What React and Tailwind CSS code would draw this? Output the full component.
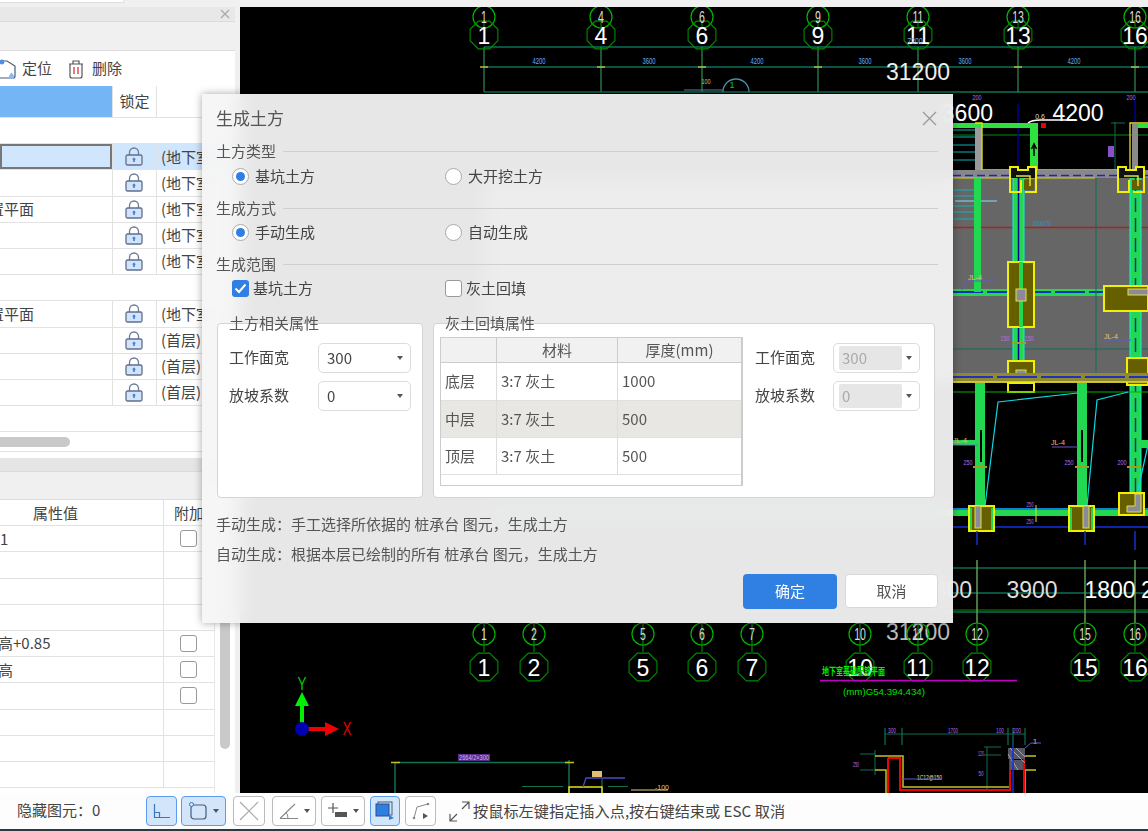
import React from 'react';

const F = { fontFamily: '"Noto Sans CJK SC","Liberation Sans",sans-serif' };
const COLON = '\uFF1A';
const COMMA = '\uFF0C';

function Lock() {
  return (
    <svg width="18" height="19" viewBox="0 0 18 19" className="block">
      <path d="M4.5 8V5.5a4.5 4.5 0 0 1 9 0V8" fill="none" stroke="#6b7a96" strokeWidth="1.3" />
      <rect x="1" y="8" width="16" height="10" rx="1.5" fill="#d3e3fa" stroke="#5f6f8e" strokeWidth="1.3" />
      <path d="M9 10.5l2 2H9.8V15H8.2v-2.5H7z" fill="#2b7de0" />
    </svg>
  );
}

const Check = () => <span className="block w-[17px] h-[17px] rounded-[3px] border border-[#999] bg-white" />;

const upperGroups = [
  [['', true], ['', false], ['置平面', false], ['', false], ['', false]],
  [['置平面', false], ['', false], ['', false], ['', false]],
];
const layers = [['(地下室)', '(地下室)', '(地下室)', '(地下室)', '(地下室)'], ['(地下室)', '(首层)', '(首层)', '(首层)']];

function BlankRow() {
  return <div className="h-[26.2px] border-b border-[#e2e2e2] bg-white" />;
}

function UpperRow({ name, selected, layer }) {
  return (
    <div className={`flex h-[26.2px] border-b border-[#e2e2e2] text-[15px] text-[#444] ${selected ? 'bg-[#d0e6fc]' : 'bg-white'}`}>
      <div className={`w-[112px] overflow-hidden flex items-center whitespace-nowrap ${selected ? 'border-2 border-[#777]' : ''}`}>
        <span className="-ml-[11px]">{name}</span>
      </div>
      <div className="w-[45px] border-x border-[#e2e2e2] flex items-center justify-center pr-[2px]"><Lock /></div>
      <div className="flex-1 pl-1 flex items-center whitespace-nowrap overflow-hidden">{layer}</div>
    </div>
  );
}

const lower = [['1', true], ['', false], ['', false], ['', false], ['高+0.85', true], ['高', true], ['', true], ['', false], ['', false], ['', false]];

function LeftPanel() {
  return (
    <aside className="w-[235px] h-full flex flex-col bg-white overflow-hidden text-[#444]">
      <div className="h-[15px] bg-[#e8e8e8] border-b border-[#dcdcdc] flex items-center justify-end pr-[5px] shrink-0">
        <svg width="10" height="10" viewBox="0 0 10 10"><path d="M1 1l8 8M9 1L1 9" stroke="#aaa" strokeWidth="1.3" /></svg>
      </div>
      <div className="h-[29px] bg-[#f0f0f0] border-b border-[#dcdcdc] shrink-0" />
      <div className="h-[35px] flex items-center text-[15px] shrink-0">
        <svg width="17" height="22" viewBox="0 0 17 22" className="mr-[5px]">
          <path d="M0 3h7l8 5v10a2 2 0 0 1-2 2H0" fill="none" stroke="#4a5a78" strokeWidth="1.2" />
          <circle cx="2" cy="4" r="2.4" fill="#4a90e8" />
          <path d="M12 21c-2 0-3-1-3-2.500 0-1.500 1.500-2 2-4 1.500 1 3 2.500 3 4 0 1.500-1 2.500-2 2.500z" fill="#8ab8f0" />
        </svg>
        <span>定位</span>
        <svg width="18" height="20" viewBox="0 0 18 20" className="ml-[15px] mr-[7px]">
          <path d="M2 5h14M6 5V2h6v3" fill="none" stroke="#555" strokeWidth="1.2" />
          <path d="M3 5v12a2 2 0 0 0 2 2h8a2 2 0 0 0 2-2V5" fill="none" stroke="#555" strokeWidth="1.2" />
          <path d="M7 8v7M11 8v7" stroke="#e04040" strokeWidth="1.4" />
        </svg>
        <span>删除</span>
      </div>
      <div className="h-[32px] flex border-b border-[#e2e2e2] text-[15px] shrink-0">
        <div className="w-[112px] bg-[#74b5f6]" />
        <div className="w-[45px] border-x border-[#e2e2e2] flex items-center justify-center">锁定</div>
        <div className="flex-1" />
      </div>
      <BlankRow />
      {upperGroups[0].map((r, i) => <UpperRow key={i} name={r[0]} selected={r[1]} layer={layers[0][i]} />)}
      <BlankRow />
      {upperGroups[1].map((r, i) => <UpperRow key={i} name={r[0]} selected={r[1]} layer={layers[1][i]} />)}
      <BlankRow />
      <div className="h-[20px] border-b border-[#e2e2e2] flex items-center shrink-0">
        <div className="w-[70px] h-[10px] rounded-r-full bg-[#c9c9c9]" />
      </div>
      <div className="h-[6px] shrink-0" />
      <div className="h-[14px] bg-[#e5e5e5] border-b border-[#dcdcdc] shrink-0" />
      <div className="h-[28px] bg-[#f0f0f0] border-b border-[#dcdcdc] shrink-0" />
      <div className="flex flex-1 min-h-0 text-[15px]">
        <div className="w-[214px]">
          <div className="flex h-[26px] border-b border-[#e2e2e2]">
            <div className="w-[163px] pl-[33px] flex items-center">属性值</div>
            <div className="flex-1 border-l border-[#e2e2e2] pl-[10px] flex items-center whitespace-nowrap overflow-hidden">附加</div>
          </div>
          {lower.map((r, i) => (
            <div key={i} className="flex h-[26.2px] border-b border-[#e2e2e2]">
              <div className="w-[163px] flex items-center whitespace-nowrap overflow-hidden">
                <span className={r[0].startsWith('高') ? '-ml-[2px]' : ''}>{r[0]}</span>
              </div>
              <div className="flex-1 border-l border-[#e2e2e2] pl-4 flex items-center">{r[1] && <Check />}</div>
            </div>
          ))}
        </div>
        <div className="flex-1 border-l border-[#e8e8e8] pl-[5px]">
          <div className="w-[10px] mt-[26px] h-[223px] rounded-full bg-[#c9c9c9]" />
        </div>
      </div>
    </aside>
  );
}

const T = ({ x, y, s = 22, c = '#fff', children, a = 'middle', f = 'Liberation Sans', w, tl }) => (
  <text x={x} y={y} fontSize={s} fill={c} textAnchor={a} dominantBaseline="central" fontFamily={f} fontWeight={w} textLength={tl} lengthAdjust={tl ? 'spacingAndGlyphs' : undefined}>{children}</text>
);

function octagon(cx, cy, r) {
  const p = [];
  for (let i = 0; i < 8; i++) {
    const t = Math.PI / 8 + (i * Math.PI) / 4;
    p.push(`${(cx + r * Math.cos(t)).toFixed(1)},${(cy + r * Math.sin(t)).toFixed(1)}`);
  }
  return p.join(' ');
}

function Bubble({ x, label, y1, y2, through }) {
  return (
    <g>
      <circle cx={x} cy={y1} r="11" fill="none" stroke="#00b400" strokeWidth="1.2" />
      <polygon points={octagon(x, y2, 15)} fill="none" stroke="#008c00" strokeWidth="1.1" />
      <line x1={x} x2={x} y1={through ? y1 - 11 : y1 + 11} y2={y2 - 15} stroke={through ? '#0a9a0a' : '#0a8a0a'} />
      <g transform={`translate(${x} ${y1}) scale(0.62 1)`}>
        <T x={0} y={0} s={17} c="#ddd">{label}</T>
      </g>
      <T x={x} y={y2 + 1} s={23}>{label}</T>
    </g>
  );
}

function Cap({ x, y, w, h }) {
  return <rect x={x} y={y} width={w} height={h} fill="#665f00" stroke="#f0f000" strokeWidth="2" />;
}

function TopCap({ x }) {
  return (
    <g>
      <path d={`M${x} 178V167H${x + 8}V170H${x + 18}V167H${x + 26}V178`} fill="#111" stroke="#f0f000" strokeWidth="2" />
      <path d={`M${x} 178V192H${x + 11}V180M${x + 26} 178V192H${x + 15}`} fill="none" stroke="#f0f000" strokeWidth="2" />
      <rect x={x + 14} y="180" width="10" height="10" fill="#665f00" />
      <path d={`M${x + 6} 176H${x + 20}V186`} fill="none" stroke="#e0e040" strokeWidth="1.5" />
    </g>
  );
}

const L = ({ p, c, w = 1, d }) => <path d={p} fill="none" stroke={c} strokeWidth={w} strokeDasharray={d} />;

function Drawing() {
  const topAxes = [[484, '1'], [601, '4'], [702, '6'], [818, '9'], [918, '11'], [1018, '13'], [1135, '16']];
  const botAxes = [[484, '1'], [534, '2'], [643, '5'], [702, '6'], [752, '7'], [860, '10'], [918, '11'], [977, '12'], [1085, '15'], [1135, '16']];
  const teal = '#0e6f55';
  return (
    <svg viewBox="240 7 908 786" width="908" height="786" className="block bg-black">
      {/* top dimension lines */}
      <L p="M484 47H1148M484 67H1148M484 92H1148" c={teal} w="1.5" />
      {topAxes.map(([x]) => <L key={x} p={`M${x} 47V92`} c="#2f8f55" w="1.2" />)}
      {topAxes.map(([x, l]) => <Bubble key={x} x={x} label={l} y1={17} y2={35} />)}
      {topAxes.map(([x]) => <L key={x} p={`M${x - 4} 67H${x + 4}`} c="#b0c040" w="1.5" />)}
      {[[539, '4200'], [649, '3600'], [757, '4200'], [865, '3600'], [965, '3600'], [1074, '4200']].map(([x, t]) => (
        <T key={x} x={x} y={61} s={9} c="#6aaef0" tl={13}>{t}</T>
      ))}
      <T x={915} y={41} s={9} c="#6aaef0" tl={15}>7200</T>
      <T x={918} y={72} s={23} c="#eee">31200</T>
      <path d="M723 92a13 13 0 0 1 26 0" fill="none" stroke="#4a90a8" strokeWidth="1.3" />
      <T x={732} y={85} s={9} c="#00d000">1</T>
      <T x={706} y={81} s={7} c="#e0c060" tl={9}>100</T>
      <L p="M684 90H723" c="#5a8aa0" />

      {/* gray slab */}
      <rect x="484" y="178" width="664" height="205" fill="#666" />
      <L p="M953 135H1148" c="#0a8a0a" />
      <T x={993} y={113} s={23} a="end">3600</T>
      <T x={1078} y={113} s={23}>4200</T>
      <T x={1040} y={116} s={7} c="#ddd">0.6</T>
      <L p="M1028 123Q1032 120 1040 120H1076" c="#fff" w="1.5" />
      <rect x="1022" y="123" width="5" height="5" fill="#f00000" />
      <rect x="1041" y="123" width="5" height="5" fill="#f00000" />
      <T x={977} y={97} s={8} c="#b070f0" tl={9}>200</T>
      <T x={1131} y={97} s={8} c="#b070f0" tl={9}>200</T>
      <rect x="1108" y="146" width="6" height="11" fill="#8a50c8" />
      <L p="M1115 122V178M1111 123H1125" c={teal} />
      <L p="M1018 104V170" c="#000090" w="1.5" />
      <L p="M1135 100V170" c="#000090" w="1.5" />

      {/* stair */}
      {[130, 137, 145, 152, 160].map((y) => <L key={y} p={`M953 ${y}H975`} c="#14b0b0" />)}
      {[190, 196, 206, 212, 219].map((y) => <L key={y} p={`M953 ${y}H975`} c="#14b0b0" />)}
      <L p="M955 201H997" c="#7fe0ff" />
      <rect x="953" y="123" width="77" height="5" fill="#30e040" />
      <rect x="975" y="128" width="7" height="42" fill="#9a9a9a" />
      <rect x="1030" y="123" width="8" height="47" fill="#30e040" />
      <path d="M1034 156V146M1031.500 149L1034 144L1036.500 149" stroke="#000" strokeWidth="1.5" fill="none" />
      <L p="M975 123H982V170H1130V123H1148" c="#e8e020" w="1.3" />
      <rect x="1132" y="124" width="6" height="46" fill="#8a8a8a" />
      <rect x="1138" y="124" width="10" height="4" fill="#30e040" />

      {/* horizontal bands */}
      <rect x="953" y="170" width="195" height="8" fill="#888" />
      <L p="M953 175.500H1148" c="#2020d0" w="1.5" d="8 4" />
      <L p="M953 178H1095" c="#d8d020" />
      <rect x="953" y="289" width="195" height="7" fill="#22d850" />
      <L p="M953 292H1148" c="#1030b0" w="2" d="30 4" />
      <L p="M953 227.500H1148" c="#b02020" w="1.5" />
      <T x={1042} y={223} s={8} c="#10a0d0" tl={19}>1000/70</T>
      <L p="M953 349H1148" c={teal} />
      <L p="M1096 178V383" c={teal} />

      {/* walls in slab */}
      <rect x="974" y="178" width="7" height="114" fill="#22d850" />
      <rect x="1013" y="178" width="11" height="205" fill="#22d850" />
      <L p="M1013 178V383M1024 178V383" c="#10f0e0" />
      <L p="M1018.500 178V383" c="#000090" w="1.5" />
      <rect x="1130" y="178" width="11" height="332" fill="#22d850" />
      <L p="M1130 178V510M1141 178V510" c="#10f0e0" />
      <L p="M1135.500 178V510" c="#1030a0" w="1.5" d="14 6" />

      {/* caps */}
      <TopCap x={1010} />
      <TopCap x={1118} />
      <Cap x={1008} y={262} w={26} h={65} />
      <L p="M1021 262V327" c="#22d850" w="4" />
      <rect x="1016" y="289" width="10" height="12" fill="#8a8a9a" stroke="#e0e040" />
      <Cap x={1104} y={286} w={44} h={25} />
      <rect x="1128" y="289" width="20" height="6" fill="#8a8a9a" stroke="#e0e040" />
      <Cap x={1008} y={361} w={26} h={24} />
      <rect x="1016" y="370" width="10" height="10" fill="#8a8a9a" stroke="#e0e040" />
      <Cap x={1127} y={358} w={21} h={27} />

      <rect x="953" y="373" width="195" height="9" fill="#8f8a30" />
      <L p="M953 377H1148" c="#2030c0" w="2" d="40 4" />
      <L p="M953 382H1148" c="#e8e020" w="1.5" />
      <rect x="1008" y="383" width="26" height="9" fill="#000" stroke="#f0f000" strokeWidth="2" />

      {/* annotations */}
      <T x={975} y={277} s={8} c="#e8c070" tl={14}>JL-4</T>
      <L p="M962 290L967 281H996" c="#5a5ad0" />
      <T x={1111} y={336} s={8} c="#e8c070" tl={14}>JL-4</T>
      <L p="M1103 340H1131" c="#5a5ad0" />
      <T x={1005} y={338} s={8} c="#b070f0" tl={9}>150</T>
      <T x={1029} y={338} s={8} c="#b070f0" tl={9}>150</T>
      <L p="M1012 343H1026" c="#a0a020" w="2" />

      {/* lower walls */}
      <L p="M953 392H1148" c="#0ab000" />
      <rect x="975" y="383" width="10" height="125" fill="#22d850" />
      <rect x="1077" y="383" width="10" height="125" fill="#22d850" />
      <L p="M981 430V462M1082 430V462" c="#000" w="2" />
      <L p="M985 506L998 402L1078 393" c="#10d8e0" w="1.2" />
      <L p="M1087 506L1097 400L1128 392" c="#10d8e0" w="1.2" />
      <L p="M1138 490L1148 445" c="#10d8e0" w="1.2" />
      <rect x="1138" y="440" width="10" height="8" fill="#22d850" />
      <rect x="953" y="440" width="22" height="5" fill="#22d850" />
      <L p="M953 445H978" c="#5a7ad0" />
      <T x={960} y={440} s={8} c="#e8c070" tl={14}>JL-4</T>
      <T x={1058} y={442} s={8} c="#e8c070" tl={14}>JL-4</T>
      <L p="M1052 447H1078" c="#5a5ad0" />
      <T x={968} y={462} s={8} c="#b070f0" tl={9}>250</T>
      <T x={1069} y={462} s={8} c="#b070f0" tl={9}>250</T>
      <T x={1122} y={462} s={8} c="#b070f0" tl={9}>200</T>
      <L p="M973 467H987M1075 467H1089M1127 467H1141" c="#a0a020" w="2" />

      <rect x="484" y="509" width="664" height="7" fill="#22d850" />
      <L p="M953 509H1148" c="#1080d0" w="2" />
      <L p="M953 527H1148" c="#1030e0" w="1.5" />
      <Cap x={969} y={506} w={25} h={25} />
      <rect x="975" y="506" width="6" height="22" fill="#8a8a9a" stroke="#e0e040" />
      <L p="M971 508V530M992 508V530" c="#22d850" w="2" />
      <Cap x={1069} y={506} w={25} h={25} />
      <rect x="1083" y="506" width="6" height="22" fill="#8a8a9a" stroke="#e0e040" />
      <L p="M1071 508V530M1092 508V530" c="#22d850" w="2" />
      <Cap x={1119} y={493} w={25} h={22} />
      <path d="M1135 494V506H1127V512H1141V494z" fill="#8a8a9a" stroke="#e0e040" />
      <T x={1030} y={504} s={7} c="#b070f0" tl={7}>250</T>
      <T x={1030} y={521} s={7} c="#b070f0" tl={7}>250</T>
      <L p="M1036 505V522" c="#e0e020" />
      <L p="M977 531V545M1085 531V545M1135 531V550" c="#1030d0" w="1.5" />

      {/* bottom dims */}
      <L p="M484 568H1148M484 593H1148M484 612H1148" c={teal} w="1.5" />
      <L p="M953 610H1148" c="#0a8a0a" />
      {[977, 1085, 1135].map((x) => <L key={x} p={`M${x} 560V623`} c="#5f9f55" w="1.5" />)}
      <T x={972} y={590} s={23} c="#ddd" a="end">1800</T>
      <T x={1032} y={590} s={23} c="#ddd">3900</T>
      <T x={1110} y={590} s={23}>1800</T>
      <T x={1141} y={590} s={23} a="start">2</T>
      <T x={918} y={632} s={23} c="#bbb">31200</T>

      {botAxes.map(([x, l]) => <Bubble key={x} x={x} label={l} y1={634} y2={667} through />)}

      {/* title */}
      <T x={822} y={670} s={10} c="#00f000" a="start" f="Noto Sans CJK SC" w="700" tl={63}>地下室基础配筋平面</T>
      <L p="M820 680.500H1017" c="#c000c0" w="1.5" />
      <T x={843} y={692} s={8.500} c="#00e000" a="start" tl={82}>(mm)G54.394.434)</T>

      {/* bottom detail */}
      <L p="M885 734H1025M885 728V745M902 728V745M1008 728V745M1013 728V745M1025 728V745" c={teal} w="1.2" />
      <T x={892} y={730} s={7} c="#b070f0" tl={8}>300</T>
      <T x={953} y={730} s={7} c="#b070f0" tl={10}>1700</T>
      <T x={1000} y={730} s={7} c="#b070f0" tl={8}>100</T>
      <T x={1017} y={730} s={7} c="#b070f0" tl={8}>200</T>
      <L p="M860 754H875M860 770H875M875 750V775" c={teal} />
      <T x={856} y={764} s={7} c="#b070f0" tl={6}>250</T>
      <L p="M987 747V790M984 747H1001M984 755H1001" c={teal} />
      <T x={981} y={753} s={7} c="#b070f0" tl={6}>120</T>
      <T x={981} y={773} s={7} c="#b070f0" tl={5}>50</T>
      <L p="M875 756H903V787H1010V756H1036M875 770H886V793M1036 770H1025V793" c="#c8c020" w="1.5" />
      <L p="M888 758H900V790H1010V758H1024V793M888 758V793" c="#f00000" w="2" />
      <rect x="1008" y="748" width="17" height="11" fill="#556" />
      <rect x="1010" y="760" width="13" height="10" fill="#556" />
      <path d="M1010 748L1025 763M1016 748L1025 757M1008 754L1018 770" stroke="#ddd" strokeWidth="0.600" />
      <L p="M1013 745V793" c="#1030e0" w="1.5" />
      <T x={1035} y={741} s={8} c="#e8c070">1</T>
      <L p="M1025 748L1031 743H1041" c="#5a5ad0" />
      <T x={917} y={777} s={7} c="#e8e080" a="start" tl={25}>1C12@150</T>
      <L p="M901 779H942" c="#5a5ad0" />

      {/* left bottom detail */}
      <L p="M395 762.500H569M395 762V793M569 760V793" c={teal} w="1.5" />
      <L p="M391 762.500H400M565 762.500H574" c="#c0c020" w="1.500" />
      <rect x="458" y="754" width="32" height="7" fill="#7a40c0" opacity=".7" />
      <T x={474} y={757.500} s={7} c="#d8b0ff" tl={30}>2664/2×300</T>
      <L p="M522 786.500H563M608 786.500H628" c={teal} w="1.2" />
      <L p="M602 779V793" c={teal} w="1.2" />
      <L p="M569 793V787H602V793" c="#e8e020" w="1.5" />
      <L p="M583 787L586 778H625" c="#4a4ac8" w="1.3" />
      <rect x="592" y="771" width="10" height="6" fill="#e0c070" />
      <T x={662} y={787} s={7} c="#e0d080">-100</T>
      <L p="M631 790H668" c="#e0d080" />

      {/* axes */}
      <L p="M302 728V701" c="#00f000" w="4" />
      <polygon points="302,692 295,706 309,706" fill="#00f000" />
      <L p="M303 729H328" c="#f00000" w="4" />
      <polygon points="339,729 325,722 325,736" fill="#f00000" />
      <circle cx="302" cy="729" r="7" fill="#0000b0" />
      <g transform="translate(302 684) scale(0.75 1)"><T x={0} y={0} s={18} c="#00d000">Y</T></g>
      <g transform="translate(347 729) scale(0.75 1)"><T x={0} y={0} s={18} c="#e00000">X</T></g>
    </svg>
  );
}

function SBtn({ w, active, children, caret }) {
  return (
    <div
      className={`h-[30px] rounded-[4px] border flex items-center justify-center gap-[6px] shrink-0 ${active ? 'bg-[#d2e5fb] border-[#5b9ded]' : 'bg-white border-[#bbb]'}`}
      style={{ width: w }}
    >
      {children}
      {caret && <span className="w-0 h-0 border-x-[3px] border-x-transparent border-t-[4px] border-t-[#555]" />}
    </div>
  );
}

function StatusBar() {
  return (
    <footer className="h-[36px] shrink-0 bg-[#fdfdfd] flex items-center text-[15px] text-[#444]">
      <span className="ml-[17px] w-[129px] whitespace-nowrap -mt-[2px]">{`隐藏图元${COLON}0`}</span>
      <SBtn w={31} active>
        <svg width="18" height="16" viewBox="0 0 18 16"><path d="M1.500 1v13.500H17M1.500 9.500H6.500V14.500" fill="none" stroke="#3277c8" strokeWidth="1.2" /></svg>
      </SBtn>
      <div className="ml-[4px]">
        <SBtn w={45} active caret>
          <svg width="18" height="18" viewBox="0 0 18 18"><rect x="2" y="3" width="15" height="14" rx="3" fill="none" stroke="#4a5a78" strokeWidth="1.2" /><circle cx="2.500" cy="2.500" r="2" fill="#d2e5fb" stroke="#3277c8" /></svg>
        </SBtn>
      </div>
      <div className="ml-[7px]">
        <SBtn w={32}>
          <svg width="20" height="20" viewBox="0 0 20 20"><path d="M1 1l18 18M19 1L1 19" stroke="#aaa" strokeWidth="1.2" /></svg>
        </SBtn>
      </div>
      <div className="ml-[7px]">
        <SBtn w={44} caret>
          <svg width="19" height="17" viewBox="0 0 19 17"><path d="M1 15.500H19M1 15.500L16 1" fill="none" stroke="#888" strokeWidth="1.1" /><path d="M7 9.500q2 2 2 6" fill="none" stroke="#888" /></svg>
        </SBtn>
      </div>
      <div className="ml-[5px]">
        <SBtn w={44} caret>
          <svg width="19" height="18" viewBox="0 0 19 18"><path d="M5 1v10M0 6h10" stroke="#555" strokeWidth="1.2" /><rect x="7" y="10" width="12" height="5" fill="#555" /></svg>
        </SBtn>
      </div>
      <div className="ml-[5px]">
        <SBtn w={30} active>
          <svg width="20" height="20" viewBox="0 0 20 20"><rect x="3" y="1" width="14" height="13" fill="none" stroke="#4a5a78" /><rect x="1" y="3" width="13" height="12" fill="#2f7fe0" stroke="#24518c" /><path d="M14 14l5 3-5 2z" fill="#2f7fe0" /></svg>
        </SBtn>
      </div>
      <div className="ml-[5px]">
        <SBtn w={31}>
          <svg width="20" height="18" viewBox="0 0 20 18"><path d="M3 16L6 5L17 2" fill="none" stroke="#888" /><circle cx="3" cy="16" r="1.300" fill="#888" /><circle cx="17" cy="2" r="1.300" fill="#888" /><path d="M12 11l5 3-5 3z" fill="#555" /></svg>
        </SBtn>
      </div>
      <svg width="21" height="21" viewBox="0 0 21 21" className="ml-[13px] mr-[3px] shrink-0">
        <path d="M13 8L20 1M13 1h7v7M8 13L1 20M1 13v7h7" fill="none" stroke="#555" strokeWidth="1.200" />
      </svg>
      <span className="whitespace-nowrap text-[15.200px] -mt-[2px]">按鼠标左键指定插入点,按右键结束或 ESC 取消</span>
    </footer>
  );
}

function Section({ title, mt }) {
  return (
    <div className={`h-[18px] flex items-center gap-[7px] -ml-[1px] ${mt || ''}`}>
      <span className="text-[15px] text-[#555] whitespace-nowrap">{title}</span>
      <span className="flex-1 h-[1px] bg-[#cfcfcf]" />
    </div>
  );
}

function Radio({ label, on, w }) {
  return (
    <label className="flex items-center gap-[6px] text-[15px] text-[#444]" style={{ width: w }}>
      <span className="w-[17px] h-[17px] rounded-full border border-[#aaa] bg-white flex items-center justify-center shrink-0">
        {on && <span className="w-[9px] h-[9px] rounded-full bg-[#2f80e2]" />}
      </span>
      {label}
    </label>
  );
}

function Select({ value, w, disabled }) {
  return (
    <div className="h-[30px] bg-white border border-[#dcdcdc] rounded-[5px] flex items-center justify-between pl-[5px] pr-[7px] text-[15px] shrink-0" style={{ width: w }}>
      {disabled
        ? <span className="w-[63px] h-[24px] bg-[#e6e6e6] rounded-[2px] flex items-center pl-[3px] text-[#aaa]">{value}</span>
        : <span className="pl-[3px] text-[#444]">{value}</span>}
      <span className="w-0 h-0 border-x-[3px] border-x-transparent border-t-[4px] border-t-[#555]" />
    </div>
  );
}

function Field({ label, value, sw, lw, disabled }) {
  return (
    <div className="flex items-center">
      <span className="text-[15px] text-[#444] whitespace-nowrap -mt-[2px]" style={{ width: lw }}>{label}</span>
      <Select value={value} w={sw} disabled={disabled} />
    </div>
  );
}

const tableRows = [['底层', '1000', 'h-[38px] bg-white'], ['中层', '500', 'h-[37px] bg-[#e8e7e4]'], ['顶层', '500', 'h-[37px] bg-white']];

function Dialog() {
  return (
    <div style={F} className="absolute left-[202px] top-[94px] w-[751px] h-[529px] px-[15px] bg-[#f5f5f5]/[0.94] backdrop-blur-[10px] shadow-[0_0_8px_rgba(0,0,0,0.35)] flex flex-col">
      <div className="h-[48px] flex items-center justify-between pr-[1px] shrink-0 -ml-[1px]">
        <span className="text-[17px] text-[#555]">生成土方</span>
        <svg width="15" height="15" viewBox="0 0 15 15"><path d="M1 1l13 13M14 1L1 14" stroke="#999" strokeWidth="1.300" /></svg>
      </div>
      <Section title="土方类型" />
      <div className="h-[32px] flex items-center pl-[15px]">
        <Radio label="基坑土方" on w={213} />
        <Radio label="大开挖土方" />
      </div>
      <Section title="生成方式" mt="mt-[7px]" />
      <div className="h-[31px] flex items-center pl-[15px]">
        <Radio label="手动生成" on w={213} />
        <Radio label="自动生成" />
      </div>
      <Section title="生成范围" mt="mt-[7px]" />
      <div className="h-[31px] flex items-center pl-[15px] text-[15px] text-[#444]">
        <span className="w-[213px] flex items-center gap-[4px]">
          <span className="w-[17px] h-[17px] rounded-[3px] bg-[#2f80e2] flex items-center justify-center">
            <svg width="13" height="11" viewBox="0 0 13 11"><path d="M1.500 5.500l3.500 3.500 6.500-7.500" fill="none" stroke="#fff" strokeWidth="2" /></svg>
          </span>
          基坑土方
        </span>
        <span className="flex items-center gap-[4px]">
          <span className="w-[17px] h-[17px] rounded-[3px] border border-[#999] bg-white" />
          灰土回填
        </span>
      </div>
      <div className="mt-[19px] flex gap-[10px] h-[175px] shrink-0">
        <div className="w-[206px] bg-white border border-[#d4d4d4] rounded-[4px] pl-[11px]">
          <div className="-mt-[11px] h-[20px] text-[15px] text-[#555] leading-[20px]">土方相关属性</div>
          <div className="mt-[10px] flex flex-col gap-[8px]">
            <Field label="工作面宽" value="300" sw={93} lw={89} />
            <Field label="放坡系数" value="0" sw={93} lw={89} />
          </div>
        </div>
        <div className="w-[502px] bg-white border border-[#d4d4d4] rounded-[4px] pl-[6px]">
          <div className="-mt-[11px] ml-[5px] h-[20px] text-[15px] text-[#555] leading-[20px]">灰土回填属性</div>
          <div className="flex mt-[4px]">
            <div className="w-[303px] h-[149px] border border-[#ccc] border-r-2 flex flex-col text-[15px] text-[#555] shrink-0">
              <div className="h-[26px] flex bg-[#f1f1f1] border-y border-[#ccc] -mt-[1px]">
                <div className="w-[56px] border-r border-[#ccc]" />
                <div className="w-[121px] border-r border-[#ccc] flex items-center justify-center">材料</div>
                <div className="flex-1 flex items-center justify-center">厚度(mm)</div>
              </div>
              {tableRows.map(([a, b, cl]) => (
                <div key={a} className={`flex border-b border-[#e0e0e0] ${cl}`}>
                  <div className="w-[56px] border-r border-[#ddd] pl-[4px] flex items-center">{a}</div>
                  <div className="w-[121px] border-r border-[#ddd] pl-[4px] flex items-center">3:7 灰土</div>
                  <div className="flex-1 pl-[4px] flex items-center">{b}</div>
                </div>
              ))}
            </div>
            <div className="ml-[12px] mt-[6px] flex flex-col gap-[8px]">
              <Field label="工作面宽" value="300" sw={87} lw={78} disabled />
              <Field label="放坡系数" value="0" sw={87} lw={78} disabled />
            </div>
          </div>
        </div>
      </div>
      <div className="mt-[11px] -ml-[1px] text-[15px] text-[#555] whitespace-nowrap">
        <div className="h-[30px] flex items-center">{`手动生成${COLON}手工选择所依据的 桩承台 图元${COMMA}生成土方`}</div>
        <div className="h-[30px] flex items-center">{`自动生成${COLON}根据本层已绘制的所有 桩承台 图元${COMMA}生成土方`}</div>
      </div>
      <div className="mt-[5px] flex justify-end gap-[8px] text-[15px]">
        <div className="w-[94px] h-[35px] rounded-[4px] bg-[#2f80e2] text-white flex items-center justify-center">确定</div>
        <div className="w-[93px] h-[34px] rounded-[4px] bg-white border border-[#d8d8d8] text-[#555] flex items-center justify-center">取消</div>
      </div>
    </div>
  );
}

export default function App() {
  return (
    <div style={F} className="relative w-[1148px] h-[831px] overflow-hidden bg-[#f0f0f0] flex flex-col">
      <div className="h-[7px] shrink-0 bg-[#f0f0f0]">
        <div className="w-[125px] h-[3px] bg-white border-b border-r border-[#ddd] rounded-br-[4px]" />
      </div>
      <div className="h-[786px] shrink-0 flex">
        <LeftPanel />
        <div className="w-[5px] bg-[#f0f0f0]" />
        <Drawing />
      </div>
      <StatusBar />
      <div className="h-[2px] bg-[#2c3a40] shrink-0" />
      <Dialog />
    </div>
  );
}
